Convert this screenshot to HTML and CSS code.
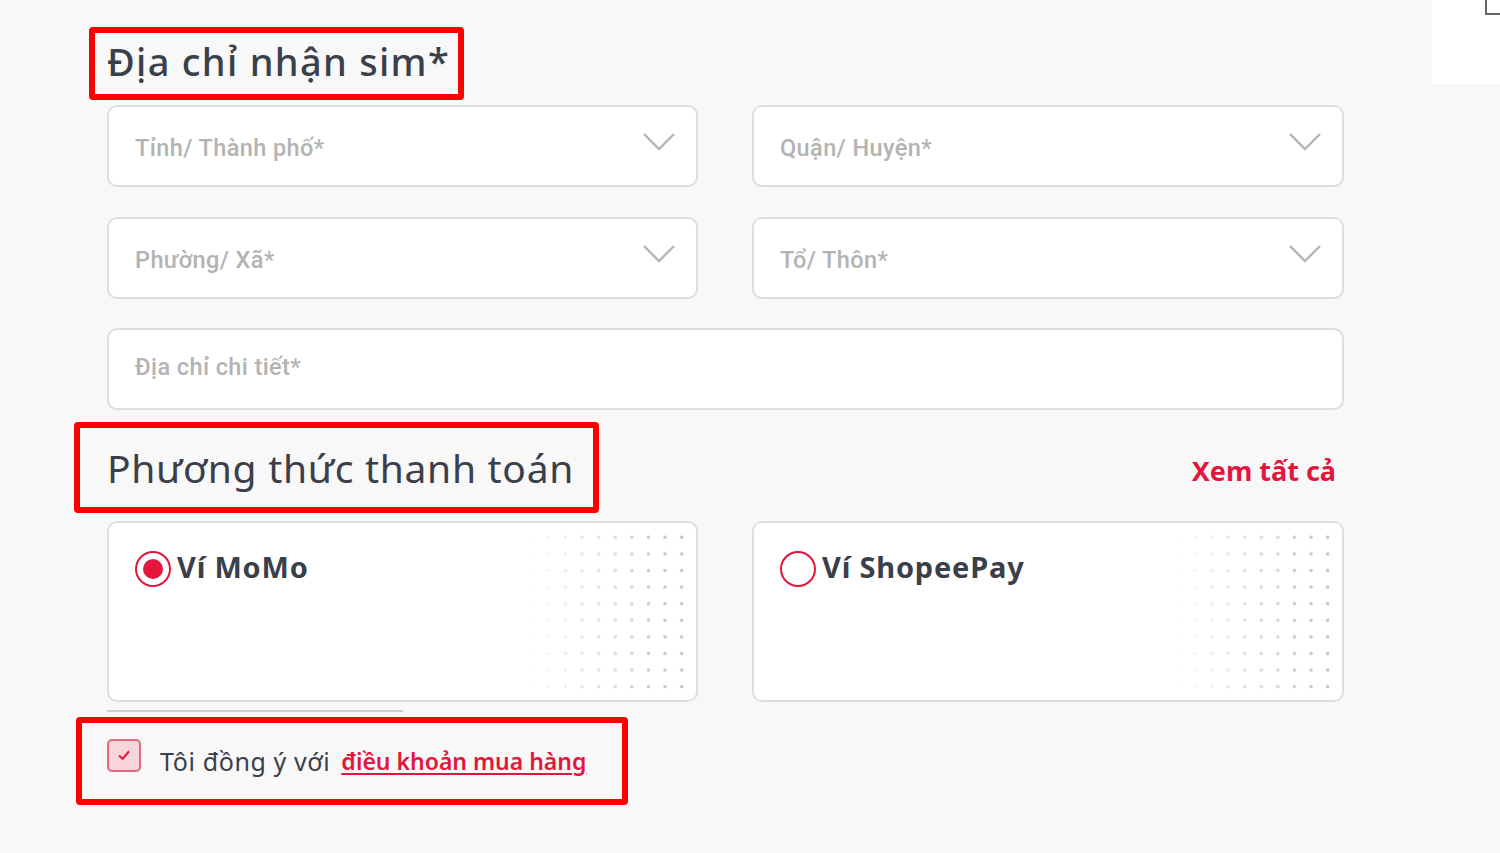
FILE: index.html
```html
<!DOCTYPE html>
<html lang="vi">
  <head>
    <meta charset="UTF-8" />
    <meta name="viewport" content="width=device-width, initial-scale=1.0" />
    <title>Địa chỉ nhận sim</title>
    <link rel="stylesheet" href="styles.css">
  </head>
  <body>
    <div class="corner-panel"><span class="corner-mark"></span></div>

    <main class="checkout">
      <!-- Address -->
      <h2 class="section-title marked">Địa chỉ nhận sim*</h2>

      <div class="field-grid">
        <div class="field select">
          <span class="placeholder">Tỉnh/ Thành phố*</span>
          <svg class="chevron" viewBox="0 0 34 20"><polyline points="2,2 17,17 32,2" /></svg>
        </div>
        <div class="field select">
          <span class="placeholder">Quận/ Huyện*</span>
          <svg class="chevron" viewBox="0 0 34 20"><polyline points="2,2 17,17 32,2" /></svg>
        </div>
        <div class="field select">
          <span class="placeholder">Phường/ Xã*</span>
          <svg class="chevron" viewBox="0 0 34 20"><polyline points="2,2 17,17 32,2" /></svg>
        </div>
        <div class="field select">
          <span class="placeholder">Tổ/ Thôn*</span>
          <svg class="chevron" viewBox="0 0 34 20"><polyline points="2,2 17,17 32,2" /></svg>
        </div>
        <div class="field wide">
          <span class="placeholder">Địa chỉ chi tiết*</span>
        </div>
      </div>

      <!-- Payment -->
      <div class="payment-head">
        <h2 class="section-title marked pay-title">Phương thức thanh toán</h2>
        <a class="see-all" href="#">Xem tất cả</a>
      </div>

      <div class="pay-grid">
        <label class="pay-card">
          <span class="radio checked"></span>
          <span class="pay-name">Ví MoMo</span>
        </label>
        <label class="pay-card">
          <span class="radio"></span>
          <span class="pay-name">Ví ShopeePay</span>
        </label>
      </div>
      <div class="scroll-line"></div>

      <!-- Terms -->
      <div class="terms marked">
        <span class="checkbox">
          <svg viewBox="0 0 16 16"><polyline points="4,8.5 7,11 12,5" /></svg>
        </span>
        <span class="terms-text">Tôi đồng ý với</span>
        <a class="terms-link" href="#">điều khoản mua hàng</a>
      </div>
    </main>
  </body>
</html>
```

FILE: styles.css
```css
/* Base */
* {
  box-sizing: border-box;
  margin: 0;
  padding: 0;
}

body {
  background-color: #f8f8f8;
  font-family: "Noto Sans", "Open Sans", sans-serif;
  color: #3a3f4a;
  min-height: 853px;
}

/* Top-right leftover panel */
.corner-panel {
  position: absolute;
  top: 0;
  right: 0;
  width: 68px;
  height: 84px;
  background-color: #fff;
}

.corner-mark {
  position: absolute;
  top: 0;
  right: 0;
  width: 15px;
  height: 15px;
  border-left: 2px solid #666;
  border-bottom: 2px solid #666;
}

/* Layout */
.checkout {
  width: 1237px;
  margin-left: 107px;
  padding-top: 27px;
}

/* Red annotation frames */
.marked {
  border: 6px solid #ff0000;
  border-radius: 4px;
}

.section-title {
  display: inline-block;
  font-size: 38px;
  font-weight: 500;
  line-height: 56px;
  padding: 0 8px 5px 12px;
  margin-left: -18px;
  letter-spacing: 1.3px;
}

/* Address fields */
.field-grid {
  display: grid;
  grid-template-columns: 591px 592px;
  column-gap: 54px;
  row-gap: 30px;
  margin-top: 5px;
}

.field {
  height: 82px;
  background-color: #fff;
  border: 2px solid #dedede;
  border-radius: 10px;
  display: flex;
  align-items: center;
  justify-content: space-between;
  padding: 0 20px 0 26px;
}

.field.wide {
  grid-column: 1 / -1;
  height: 82px;
  margin-top: -1px;
}

.placeholder {
  font-family: Roboto, "Noto Sans", sans-serif;
  font-size: 23.5px;
  font-weight: 500;
  color: #b3b3b3;
  letter-spacing: 0.4px;
  margin-top: 3px;
}

.field.wide .placeholder {
  margin-top: -4px;
}

.chevron {
  width: 34px;
  height: 20px;
  margin-top: -8px;
}

.chevron polyline {
  fill: none;
  stroke: #b5b5b5;
  stroke-width: 2.4;
}

/* Payment */
.payment-head {
  display: flex;
  align-items: center;
  justify-content: space-between;
  margin-top: 12px;
  margin-left: -33px;
  padding-right: 8px;
}

.pay-title {
  margin-left: 0;
  font-size: 39px;
  font-weight: 400;
  line-height: 79px;
  letter-spacing: 0.7px;
  padding: 0 19px 0 27px;
}

.see-all {
  font-size: 27px;
  font-weight: 700;
  color: #e3173e;
  text-decoration: none;
  margin-top: 6px;
}

.pay-grid {
  display: grid;
  grid-template-columns: 591px 592px;
  column-gap: 54px;
  margin-top: 8px;
}

.pay-card {
  position: relative;
  height: 181px;
  background-color: #fff;
  border: 2px solid #dedede;
  border-radius: 10px;
  display: flex;
  align-items: flex-start;
  gap: 6px;
  padding: 28px 26px;
  overflow: hidden;
}

/* dotted decoration on the right of each card */
.pay-card::after {
  content: "";
  position: absolute;
  top: 6px;
  right: 4px;
  width: 168px;
  height: 168px;
  background-image: radial-gradient(circle, #c9c9c9 1.6px, transparent 2.2px);
  background-size: 16.6px 16.6px;
  -webkit-mask-image: linear-gradient(to right, transparent, #000 85%);
  mask-image: linear-gradient(to right, transparent, #000 85%);
}

.radio {
  width: 36px;
  height: 36px;
  border: 2px solid #e3173e;
  border-radius: 50%;
  flex-shrink: 0;
  display: flex;
  align-items: center;
  justify-content: center;
}

.radio.checked::before {
  content: "";
  width: 20px;
  height: 20px;
  border-radius: 50%;
  background-color: #e3173e;
}

.pay-name {
  font-size: 29px;
  font-weight: 700;
  line-height: 32px;
  letter-spacing: 0.8px;
  color: #3a3f4a;
}

.scroll-line {
  width: 296px;
  height: 2px;
  background-color: #cfcfcf;
  margin-top: 8px;
}

/* Terms */
.terms {
  display: inline-flex;
  align-items: center;
  width: 552px;
  height: 88px;
  margin-top: 5px;
  margin-left: -31px;
  padding: 0 0 0 25px;
}

.checkbox {
  width: 34px;
  height: 33px;
  border: 2px solid #e06a7c;
  border-radius: 5px;
  background-color: #f7d5da;
  display: flex;
  align-items: center;
  justify-content: center;
  margin-top: -12px;
}

.checkbox svg {
  width: 20px;
  height: 20px;
}

.checkbox polyline {
  fill: none;
  stroke: #e3173e;
  stroke-width: 1.6;
}

.terms-text {
  font-size: 25px;
  margin-left: 19px;
  letter-spacing: 0.6px;
  color: #3a3f4a;
}

.terms-link {
  font-size: 23px;
  font-weight: 600;
  color: #e3173e;
  margin-left: 11px;
  text-underline-offset: 3px;
}
```
